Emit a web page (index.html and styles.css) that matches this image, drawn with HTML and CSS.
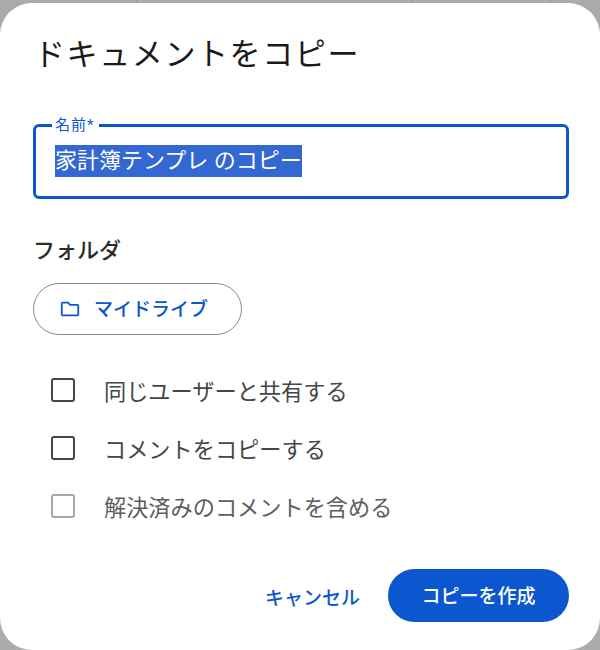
FILE: index.html
```html
<!DOCTYPE html>
<html lang="ja">

<head>
    <meta charset="UTF-8">
    <title>ドキュメントをコピー</title>
    <link rel="stylesheet" href="styles.css">
</head>

<body>
    <div class="backdrop">
        <i></i><i></i><i></i><i></i>
    </div>
    <div class="dialog">
        <h1 class="title">ドキュメントをコピー</h1>

        <div class="name-field">
            <span class="name-label">名前*</span>
            <span class="name-value"><span class="selected">家計簿テンプレ のコピー</span></span>
        </div>

        <div class="folder-label">フォルダ</div>
        <div class="folder-button">
            <svg class="folder-icon" width="22" height="22" viewBox="0 0 24 24">
                <path fill="none" stroke="currentColor" stroke-width="2" stroke-linejoin="round" d="M4 5h6l2 2.5h8a1 1 0 0 1 1 1V18a1 1 0 0 1-1 1H4a1 1 0 0 1-1-1V6a1 1 0 0 1 1-1z" />
            </svg>
            <span class="folder-name">マイドライブ</span>
        </div>

        <div class="options">
            <div class="option">
                <span class="checkbox"></span>
                <span>同じユーザーと共有する</span>
            </div>
            <div class="option">
                <span class="checkbox"></span>
                <span>コメントをコピーする</span>
            </div>
            <div class="option disabled">
                <span class="checkbox"></span>
                <span>解決済みのコメントを含める</span>
            </div>
        </div>

        <div class="actions">
            <span class="cancel">キャンセル</span>
            <span class="create">コピーを作成</span>
        </div>
    </div>
</body>

</html>
```

FILE: styles.css
```css
html,
body {
    height: 100%;
}

body {
    margin: 0;
    height: 650px;
    overflow: hidden;
    background-color: #ababab;
    font-family: Roboto, "Noto Sans CJK JP", sans-serif;
    color: #1f1f1f;
}

.backdrop {
    display: flex;
    height: 3px;
    padding-left: 136px;
    gap: 137px;
}

.backdrop i {
    width: 1px;
    background-color: #9a9a9a;
}

.dialog {
    height: 647px;
    box-sizing: border-box;
    background-color: #fff;
    border-radius: 32px;
    padding: 0 31px 0 33px;
}

.title {
    margin: 0;
    padding: 31px 0 0 1px;
    font-size: 31px;
    line-height: 42px;
    font-weight: 400;
    letter-spacing: 1.6px;
    color: #1a1a1a;
}

.name-field {
    position: relative;
    margin-top: 48px;
    height: 75px;
    box-sizing: border-box;
    border: 3px solid #0b57d0;
    border-radius: 6px;
    padding: 18px 0 0 19px;
}

.name-label {
    position: absolute;
    top: -10px;
    left: 16px;
    padding: 0 5px 0 3px;
    background-color: #fff;
    color: #0b57d0;
    font-size: 15px;
    line-height: 16px;
    letter-spacing: 1px;
}

.name-value {
    display: block;
    font-size: 22px;
    line-height: 32px;
    color: #fff;
}

.selected {
    display: inline-block;
    height: 32px;
    background-color: #3367d1;
}

.folder-label {
    margin-top: 36px;
    font-size: 22px;
    line-height: 32px;
    font-weight: 500;
    color: #2b2b2b;
}

.folder-button {
    display: flex;
    align-items: center;
    gap: 13px;
    margin-top: 16px;
    width: 209px;
    height: 52px;
    box-sizing: border-box;
    border: 1px solid #8a8a8a;
    border-radius: 26px;
    padding-left: 25px;
    color: #0b57d0;
    font-size: 19px;
    font-weight: 500;
}

.folder-icon {
    flex: none;
}

.folder-name {
    padding-bottom: 3px;
}

.options {
    margin-top: 26px;
}

.option {
    display: flex;
    align-items: center;
    gap: 29px;
    height: 58px;
    padding-left: 18px;
    font-size: 22.2px;
    color: #444746;
}

.checkbox {
    width: 24px;
    height: 24px;
    box-sizing: border-box;
    border: 2.5px solid #444746;
    border-radius: 3px;
}

.option.disabled .checkbox {
    border-color: #a8a8a8;
}

.option.disabled {
    color: #5e5e5e;
}

.actions {
    display: flex;
    justify-content: flex-end;
    align-items: center;
    gap: 28px;
    margin-top: 34px;
}

.cancel {
    padding-top: 2px;
    color: #0b57d0;
    font-size: 19px;
    font-weight: 500;
}

.create {
    width: 181px;
    height: 53px;
    line-height: 55px;
    text-align: center;
    background-color: #0b57d0;
    border-radius: 27px;
    color: #fff;
    font-size: 19px;
    font-weight: 500;
}
```
